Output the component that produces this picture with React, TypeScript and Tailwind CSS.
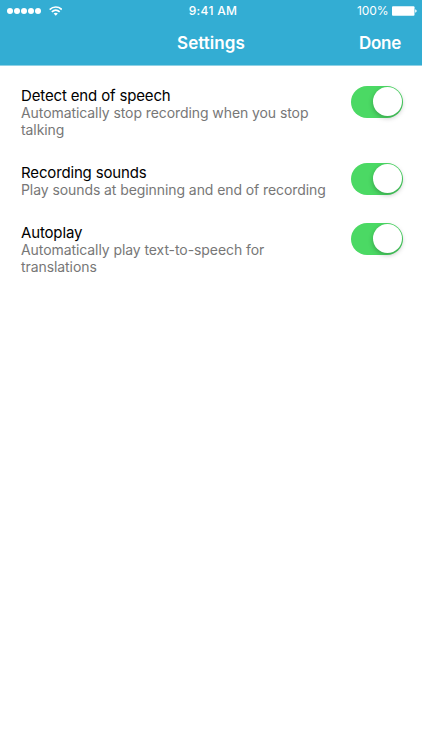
type Setting = { title: string; lines: string[] };

const settings: Setting[] = [
  { title: "Detect end of speech", lines: ["Automatically stop recording when you stop", "talking"] },
  { title: "Recording sounds", lines: ["Play sounds at beginning and end of recording"] },
  { title: "Autoplay", lines: ["Automatically play text-to-speech for", "translations"] },
];

function Toggle() {
  return (
    <button
      role="switch"
      aria-checked="true"
      className="flex h-[31.5px] w-[52px] shrink-0 items-center justify-end rounded-full bg-[#4bd964] pr-[1.3px]"
    >
      <span className="size-[28.8px] rounded-full bg-white shadow-[0_2px_5px_rgba(0,0,0,0.25)]" />
    </button>
  );
}

function StatusBar() {
  return (
    <div className="grid h-[21px] grid-cols-3 items-center pt-px pr-[5.5px] pl-[7px] text-white">
      <div className="flex items-center">
        <div className="flex gap-[1.2px]">
          {[0, 1, 2, 3, 4].map((dot) => (
            <span key={dot} className="size-[5.9px] rounded-full bg-white" />
          ))}
        </div>
        <svg className="-mt-px ml-[7.7px] h-[10px] w-[13.5px]" viewBox="0 0 14 10" fill="none" stroke="white">
          <path d="M.7 3.5C4.4-.1 9.6-.1 13.3 3.5" strokeWidth="1.7" />
          <path d="M2.9 5.9C5.4 3.6 8.6 3.6 11.1 5.9" strokeWidth="1.7" />
          <path d="M4.8 7.6C6.1 6.5 7.9 6.5 9.2 7.6L7 9.9Z" fill="white" stroke="none" />
        </svg>
      </div>
      <div className="pl-[2.5px] text-center text-[12px] leading-none font-medium tracking-[0.3px] whitespace-nowrap">9:41 AM</div>
      <div className="flex items-center justify-end gap-[3px]">
        <span className="text-[12px] leading-none tracking-[-0.1px]">100%</span>
        <svg className="h-[10px] w-[25px]" viewBox="0 0 25 10" fill="white">
          <rect x="0" y="0.2" width="22.5" height="9.6" rx="1" />
          <path d="M23.2 3.2Q24.7 3.7 24.7 5T23.2 6.8Z" />
        </svg>
      </div>
    </div>
  );
}

export default function App() {
  return (
    <div className="h-[750px] w-[422px] overflow-hidden bg-white font-['Inter',sans-serif]">
      <header className="h-[66px] border-b border-[#8fd1e5] bg-[#33add3]">
        <StatusBar />
        <div className="grid h-11 grid-cols-3 items-center px-[21px] pt-[2px] text-[17px] font-semibold text-white">
          <h1 className="col-start-2 text-center tracking-[0.05px]">Settings</h1>
          <button className="text-right tracking-[-0.25px]">Done</button>
        </div>
      </header>
      <main className="flex flex-col gap-[25px] pt-5 pr-[18.6px] pl-[21px]">
        {settings.map(({ title, lines }) => (
          <section key={title} className="flex items-start justify-between">
            <div>
              <h2 className="h-[18px] text-[15px] leading-[20px] tracking-[-0.15px] whitespace-nowrap text-black">{title}</h2>
              {lines.map((line) => (
                <p key={line} className="text-[14px] leading-[17px] tracking-[-0.08px] whitespace-nowrap text-[#777777]">{line}</p>
              ))}
            </div>
            <Toggle />
          </section>
        ))}
      </main>
    </div>
  );
}
